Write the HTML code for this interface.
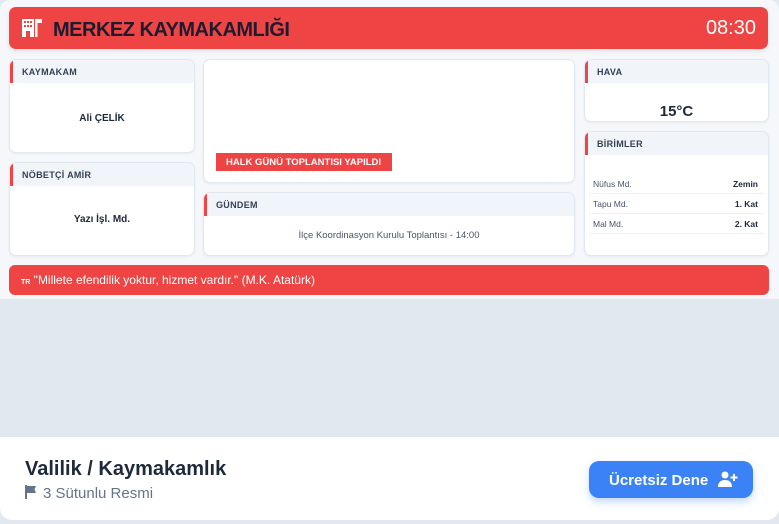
<!DOCTYPE html>
<html><head><meta charset="utf-8"><style>
*{box-sizing:border-box;margin:0;padding:0}
body{width:779px;height:524px;font-family:"Liberation Sans",sans-serif;background:#e2e8f0;position:relative;overflow:hidden}
.top{position:absolute;left:0;top:0;width:779px;height:299px;background:#f5f7fa;border-radius:10px 10px 0 0}
.hdr{position:absolute;left:9px;top:7px;width:759px;height:42px;background:#ef4444;border-radius:7px;box-shadow:0 2px 4px rgba(0,0,0,.1)}
.hdr h1{position:absolute;left:44px;top:12px;font-size:20px;font-weight:bold;color:#1e1b2e;letter-spacing:-.5px}
.hdr .t{position:absolute;right:12px;top:10px;font-size:20px;color:#fff}
.card{position:absolute;background:#fff;border:1px solid #e2e8f0;border-radius:7px;overflow:hidden;box-shadow:0 1px 2px rgba(0,0,0,.06)}
.ch{height:23px;background:#f1f5f9;border-left:3px solid #ef4444;font-size:9px;font-weight:bold;color:#334155;padding:7px 0 0 9px;letter-spacing:.3px}
.cb{text-align:center;font-size:10px;font-weight:bold;color:#1e293b}
.row{display:flex;justify-content:space-between;font-size:8.5px;color:#475569;padding:0 6px 0 4px;height:20px;line-height:20px;border-bottom:1px solid #eef1f5;margin:0 4px}
.row b{color:#1e293b}
.quote{position:absolute;left:9px;top:265px;width:760px;height:30px;background:#ef4444;border-radius:6px;color:#fff;font-size:12px;padding:8px 0 0 12px}
.foot{position:absolute;left:0;top:437px;width:779px;height:83px;background:#fff;border-radius:0 0 12px 12px}
.btn{position:absolute;left:589px;top:24px;width:164px;height:37px;background:#3b82f6;border-radius:10px;color:#fff;font-weight:bold;font-size:15px;padding:10px 0 0 20px;box-shadow:0 4px 8px rgba(59,130,246,.3)}
</style></head><body>
<div class="top"></div>
<div class="hdr">
<svg style="position:absolute;left:13px;top:12px" width="20" height="18" viewBox="0 0 20 18"><rect x="0" y="0" width="12" height="18" fill="#fff"/><rect x="13" y="0" width="7" height="4" fill="#fff"/><rect x="13" y="0" width="2.5" height="18" fill="#fff"/><g fill="#ef4444"><rect x="2" y="2" width="2" height="2"/><rect x="5" y="2" width="2" height="2"/><rect x="8" y="2" width="2" height="2"/><rect x="2" y="6" width="2" height="2"/><rect x="5" y="6" width="2" height="2"/><rect x="8" y="6" width="2" height="2"/><rect x="4" y="12" width="4" height="6"/></g></svg>
<h1>MERKEZ KAYMAKAMLIĞI</h1><div class="t">08:30</div></div>

<div class="card" style="left:9px;top:59px;width:186px;height:94px"><div class="ch">KAYMAKAM</div><div class="cb" style="padding-top:30px">Ali ÇELİK</div></div>
<div class="card" style="left:9px;top:162px;width:186px;height:94px"><div class="ch">NÖBETÇİ AMİR</div><div class="cb" style="padding-top:28px">Yazı İşl. Md.</div></div>
<div class="card" style="left:203px;top:59px;width:372px;height:124px">
<div style="position:absolute;left:12px;top:93px;width:176px;height:18px;background:#ef4444;color:#fff;font-size:9.5px;font-weight:bold;padding:4px 0 0 10px">HALK GÜNÜ TOPLANTISI YAPILDI</div></div>
<div class="card" style="left:203px;top:192px;width:372px;height:64px"><div class="ch">GÜNDEM</div><div style="text-align:center;font-size:9.5px;color:#475569;padding-top:14px">İlçe Koordinasyon Kurulu Toplantısı - 14:00</div></div>
<div class="card" style="left:584px;top:59px;width:185px;height:63px"><div class="ch">HAVA</div><div class="cb" style="font-size:15px;padding-top:20px">15°C</div></div>
<div class="card" style="left:584px;top:131px;width:185px;height:125px"><div class="ch">BİRİMLER</div><div style="height:19px"></div>
<div class="row"><span>Nüfus Md.</span><b>Zemin</b></div><div class="row"><span>Tapu Md.</span><b>1. Kat</b></div><div class="row"><span>Mal Md.</span><b>2. Kat</b></div></div>

<div class="quote"><span style="font-size:7px;font-weight:bold">TR</span> "Millete efendilik yoktur, hizmet vardır." (M.K. Atatürk)</div>

<div class="foot">
<div style="position:absolute;left:25px;top:21px;font-size:20px;font-weight:bold;color:#1e293b">Valilik / Kaymakamlık</div>
<div style="position:absolute;left:25px;top:48px;font-size:15px;color:#64748b"><svg width="12" height="14" viewBox="0 0 12 14" style="vertical-align:-1px;margin-right:6px"><rect x="0" y="0" width="2" height="14" fill="#64748b"/><path d="M2 1h9l-1.5 3.5L11 8H2z" fill="#64748b"/></svg>3 Sütunlu Resmi</div>
<div class="btn">Ücretsiz Dene <svg width="20" height="16" viewBox="0 0 20 16" style="vertical-align:-2px;margin-left:6px"><circle cx="7" cy="4" r="3.5" fill="#fff"/><path d="M0 16c0-5 3-7 7-7s7 2 7 7z" fill="#fff"/><path d="M16 3v7M12.5 6.5h7" stroke="#fff" stroke-width="2"/></svg></div>
</div>
</body></html>
